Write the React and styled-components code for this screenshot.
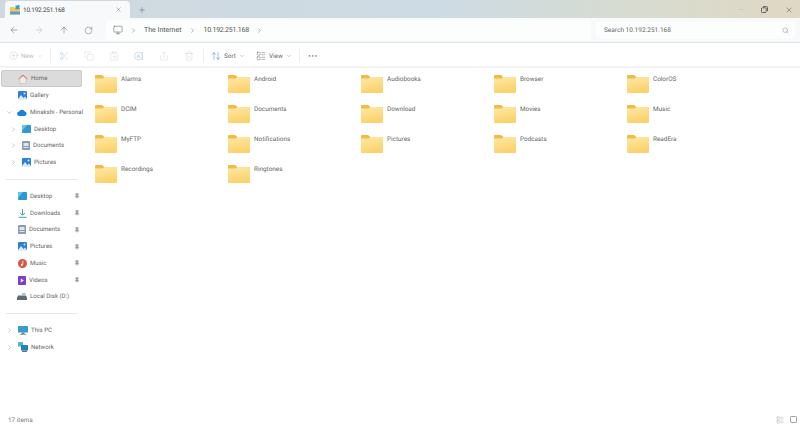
import React from "react";
import styled, { createGlobalStyle } from "styled-components";
import {
  ArrowLeft,
  ArrowRight,
  ArrowUp,
  RotateCw,
  ChevronRight,
  ChevronDown,
  CirclePlus,
  Scissors,
  Copy,
  ClipboardCopy,
  Share,
  Trash2,
  ArrowUpDown,
  LayoutList,
  Monitor,
  Search,
  X,
  Plus,
  Minus,
  Pin,
} from "lucide-react";

const GlobalStyle = createGlobalStyle`
  html, body { margin: 0; padding: 0; background: #fff; }
  body {
    font-family: Roboto, "Noto Sans", sans-serif;
    color: #555;
    overflow: hidden;
    text-rendering: geometricPrecision;
  }
  svg { flex: none; }
`;

const Window = styled.div`
  width: 800px;
  height: 425px;
  display: flex;
  flex-direction: column;
  background: #fff;
  overflow: hidden;
`;

const TitleBar = styled.div`
  height: 18px;
  flex: none;
  display: flex;
  align-items: flex-end;
  padding-left: 5px;
  background: linear-gradient(90deg, #cfd8de 0%, #cddbe4 55%, #d8dcd0 80%, #e0d8c4 100%);
`;

const Tab = styled.div`
  width: 125px;
  height: 17px;
  box-sizing: border-box;
  display: flex;
  align-items: center;
  padding: 0 8px 0 5px;
  gap: 3px;
  background: #f7f9fa;
  border-radius: 4px 4px 0 0;
  font-size: 6.4px;
  letter-spacing: -0.2px;
  color: #444;
`;

const TabTitle = styled.span`
  flex: 1;
`;

const NewTab = styled.div`
  margin: 0 0 0 8px;
  height: 17px;
  display: flex;
  align-items: center;
  color: #666;
`;

const WindowControls = styled.div`
  margin-left: auto;
  height: 17px;
  display: flex;
  align-items: center;
  gap: 17px;
  padding-right: 7px;
  color: #555;
`;

const AddressRow = styled.div`
  height: 25px;
  flex: none;
  box-sizing: border-box;
  display: flex;
  align-items: center;
  background: #f7f9fa;
  border-bottom: 1px solid #dde3e6;
  padding-left: 9px;
`;

const NavButtons = styled.div`
  display: flex;
  gap: 15px;
  align-items: center;
  width: 96px;
  flex: none;
  color: #777;
`;

const PathBox = styled.div`
  width: 485px;
  height: 20px;
  margin-left: 1px;
  flex: none;
  display: flex;
  align-items: center;
  gap: 7px;
  padding-left: 7px;
  box-sizing: border-box;
  background: #fcfdfd;
  border-radius: 3px;
  font-size: 7px;
  color: #555;
`;

const PathAddress = styled.span`
  margin-left: 1px;
  letter-spacing: -0.25px;
`;

const SearchBox = styled.div`
  width: 199px;
  height: 17px;
  margin-left: 5px;
  flex: none;
  box-sizing: border-box;
  display: flex;
  align-items: center;
  justify-content: space-between;
  padding: 0 6px 0 8px;
  background: #fcfdfd;
  border-radius: 3px;
  font-size: 6.5px;
  color: #666;
`;

const Toolbar = styled.div`
  height: 25px;
  flex: none;
  box-sizing: border-box;
  display: flex;
  align-items: center;
  padding: 2px 0 0 9px;
  background: #fff;
  border-bottom: 2px solid #f3f3f3;
  font-size: 6.4px;
  color: #666;
`;

const ToolLabel = styled.div`
  display: flex;
  align-items: center;
  gap: 3px;
  color: ${(p) => (p.$muted ? "#bbb" : "#666")};
  width: ${(p) => p.$width}px;
  flex: none;
`;

const ToolIcons = styled.div`
  display: flex;
  align-items: center;
  gap: 15px;
  width: 152px;
  flex: none;
  color: #c7d6e2;
  padding-left: 8px;
  box-sizing: border-box;
`;

const Separator = styled.div`
  width: 1px;
  height: 15px;
  background: #eee;
  flex: none;
  margin-right: ${(p) => p.$gap || 0}px;
`;

const Dots = styled.div`
  letter-spacing: 0.5px;
  font-size: 9px;
  font-weight: 700;
  color: #444;
  line-height: 1;
  margin-top: 3px;
`;

const Body = styled.div`
  flex: 1;
  display: flex;
  min-height: 0;
`;

const Sidebar = styled.div`
  width: 83px;
  flex: none;
  padding: 2px 0 0 1px;
  box-sizing: border-box;
`;

const NavRow = styled.div`
  width: 81px;
  height: 16.75px;
  box-sizing: border-box;
  display: flex;
  align-items: center;
  gap: 3px;
  padding: 1px 0 0 ${(p) => p.$indent}px;
  font-size: 6.1px;
  color: #666;
  white-space: nowrap;
  background: ${(p) => (p.$active ? "#dbdbdb" : "transparent")};
  border-radius: 2px;
  border: ${(p) => (p.$active ? "1px solid #cbcbcb" : "none")};
`;

const Arrow = styled.span`
  width: 8px;
  margin-left: -12px;
  margin-right: 1px;
  display: flex;
  color: #888;
`;

const PinMark = styled.span`
  margin-left: auto;
  margin-right: 2px;
  display: flex;
  color: #999;
`;

const Divider = styled.div`
  width: 72px;
  height: 1px;
  margin: 8px 0 8px 5px;
  background: #e8e8e8;
`;

const Content = styled.div`
  flex: 1;
  padding: 7px 0 0 12px;
  display: grid;
  grid-template-columns: repeat(5, 133px);
  grid-auto-rows: 30px;
  align-content: start;
`;

const Item = styled.div`
  display: flex;
  gap: 4px;
  font-size: 6.4px;
  color: #666;
`;

const ItemName = styled.span`
  line-height: 9px;
`;

const StatusBar = styled.div`
  height: 10px;
  flex: none;
  box-sizing: border-box;
  display: flex;
  align-items: center;
  justify-content: space-between;
  padding: 0 3px 1px 8px;
  font-size: 6.4px;
  color: #777;
`;

const ViewIcons = styled.div`
  display: flex;
  gap: 6px;
  align-items: center;
  color: #888;
`;

const Folder = () => (
  <svg width="22" height="18" viewBox="0 0 22 18">
    <defs>
      <linearGradient id="folderFront" x1="0" y1="0" x2="0.300" y2="1">
        <stop offset="0" stopColor="#fee9a8" />
        <stop offset="1" stopColor="#fbd26c" />
      </linearGradient>
    </defs>
    <path d="M0 1a1 1 0 0 1 1-1h6l2.500 2H21a1 1 0 0 1 1 1v2H0z" fill="#f5ba45" />
    <path d="M0 3.500h7.500l2-1.500H21a1 1 0 0 1 1 1v14a1 1 0 0 1-1 1H1a1 1 0 0 1-1-1z" fill="url(#folderFront)" />
  </svg>
);

const HomeIcon = () => (
  <svg width="10" height="10" viewBox="0 0 10 10">
    <path d="M2 5v4.500h6V5L5 2z" fill="#f2ece6" stroke="#b5b5b5" strokeWidth="0.500" />
    <path d="M0.500 5 5 1l4.500 4" fill="none" stroke="#d9775f" strokeWidth="1" />
  </svg>
);

const PicturesIcon = () => (
  <svg width="9" height="9" viewBox="0 0 9 9">
    <rect width="9" height="9" rx="1" fill="#2f7fd6" />
    <path d="M0 8 3 4l2.500 3L7 5.500 9 8v1H0z" fill="#d8ecfb" />
    <circle cx="6.500" cy="2.500" r="1" fill="#d8ecfb" />
  </svg>
);

const CloudIcon = () => (
  <svg width="10" height="7" viewBox="0 0 10 7">
    <path d="M2.500 7a2.200 2.200 0 0 1-.3-4.400A3 3 0 0 1 7.800 2.500 2.300 2.300 0 0 1 7.700 7z" fill="#1583d8" />
  </svg>
);

const DesktopIcon = () => (
  <svg width="9" height="8" viewBox="0 0 9 8">
    <rect width="9" height="8" rx="0.800" fill="#2b9ad4" />
    <path d="M0 0h5L0 6z" fill="#67c7ea" />
  </svg>
);

const DocumentsIcon = () => (
  <svg width="8" height="9" viewBox="0 0 8 9">
    <rect width="8" height="9" rx="0.800" fill="#8b9cb0" />
    <rect x="1.500" y="2" width="5" height="3" fill="#dde4ec" />
    <rect x="1.500" y="6" width="5" height="1" fill="#dde4ec" />
  </svg>
);

const DownloadsIcon = () => (
  <svg width="9" height="9" viewBox="0 0 9 9">
    <path d="M4.500 0v6M2 3.800l2.500 2.500L7 3.800" fill="none" stroke="#33a37a" strokeWidth="0.900" />
    <path d="M0.500 8.300h8" stroke="#3c8fc4" strokeWidth="0.900" />
  </svg>
);

const MusicIcon = () => (
  <svg width="9" height="9" viewBox="0 0 9 9">
    <circle cx="4.500" cy="4.500" r="4.500" fill="#d9573f" />
    <path d="M4.800 1.800v3.800" stroke="#fff" strokeWidth="0.800" />
    <circle cx="3.800" cy="5.800" r="1.100" fill="#fff" />
  </svg>
);

const VideosIcon = () => (
  <svg width="8" height="9" viewBox="0 0 8 9">
    <rect width="8" height="9" rx="0.800" fill="#7b3fc9" />
    <path d="M2.800 2.500v4l3-2z" fill="#fff" />
  </svg>
);

const DiskIcon = () => (
  <svg width="10" height="7" viewBox="0 0 10 7">
    <path d="M1 2.500h8l1 2.500v2H0V5z" fill="#5e6a73" />
    <path d="M5 0h3.500v2.500H5z" fill="#a9c3d6" />
  </svg>
);

const PcIcon = () => (
  <svg width="10" height="9" viewBox="0 0 10 9">
    <rect width="10" height="6.500" rx="0.600" fill="#3a9bd0" />
    <rect x="3.500" y="6.500" width="3" height="1.500" fill="#6d8492" />
    <rect x="2" y="8" width="6" height="1" fill="#8fa3af" />
  </svg>
);

const NetworkIcon = () => (
  <svg width="10" height="10" viewBox="0 0 10 10">
    <rect width="5" height="4.500" rx="0.500" fill="#56b3de" />
    <rect x="3" y="3" width="7" height="5.500" rx="0.500" fill="#1f86bd" />
    <rect x="4" y="8.500" width="5" height="1.500" fill="#5d7a8a" />
  </svg>
);

const TabIcon = () => (
  <svg width="10" height="10" viewBox="0 0 10 10">
    <path d="M0 2h4l1 1h5v6.500H0z" fill="#f6c84f" />
    <path d="M5.500 0.500 9.500 0v4l-4 .5z" fill="#3d9bd6" />
    <path d="M0 6.500h10v3H0z" fill="#5f9fc9" />
  </svg>
);

const RestoreIcon = () => (
  <svg width="7" height="7" viewBox="0 0 7 7" fill="none" stroke="currentColor" strokeWidth="0.900">
    <rect x="0.500" y="1.800" width="4.700" height="4.700" rx="0.800" />
    <path d="M2 .6h3.500a1 1 0 0 1 1 1V5" />
  </svg>
);

const RenameIcon = () => (
  <svg width="10" height="10" viewBox="0 0 10 10" fill="none" stroke="currentColor" strokeWidth="0.800">
    <circle cx="4.500" cy="5" r="4" />
    <path d="M3 7l1.500-4L6 7M3.500 5.800h2M8.500 1v8" />
  </svg>
);

const folders = [
  "Alarms", "Android", "Audiobooks", "Browser", "ColorOS",
  "DCIM", "Documents", "Download", "Movies", "Music",
  "MyFTP", "Notifications", "Pictures", "Podcasts", "ReadEra",
  "Recordings", "Ringtones",
];

const pinned = [
  ["Desktop", DesktopIcon],
  ["Downloads", DownloadsIcon],
  ["Documents", DocumentsIcon],
  ["Pictures", PicturesIcon],
  ["Music", MusicIcon],
  ["Videos", VideosIcon],
];

const Chevron = () => (
  <Arrow>
    <ChevronRight size={7} strokeWidth={1.5} />
  </Arrow>
);

const App = () => {
  return (
    <Window>
      <GlobalStyle />
      <TitleBar>
        <Tab>
          <TabIcon />
          <TabTitle>10.192.251.168</TabTitle>
          <X size={7} strokeWidth={1.5} color="#666" />
        </Tab>
        <NewTab>
          <Plus size={8} strokeWidth={1.5} />
        </NewTab>
        <WindowControls>
          <Minus size={7} strokeWidth={1} color="#999" />
          <RestoreIcon />
          <X size={8} strokeWidth={1.5} />
        </WindowControls>
      </TitleBar>

      <AddressRow>
        <NavButtons>
          <ArrowLeft size={10} strokeWidth={1.4} />
          <ArrowRight size={10} strokeWidth={1.4} color="#bbb" />
          <ArrowUp size={10} strokeWidth={1.4} />
          <RotateCw size={9} strokeWidth={1.4} />
        </NavButtons>
        <PathBox>
          <Monitor size={10} strokeWidth={1.2} color="#555" />
          <ChevronRight size={7} strokeWidth={1.5} />
          <span>The Internet</span>
          <ChevronRight size={7} strokeWidth={1.5} />
          <PathAddress>10.192.251.168</PathAddress>
          <ChevronRight size={7} strokeWidth={1.5} />
        </PathBox>
        <SearchBox>
          <span>Search 10.192.251.168</span>
          <Search size={7} strokeWidth={1.4} color="#777" />
        </SearchBox>
      </AddressRow>

      <Toolbar>
        <ToolLabel $muted $width={41}>
          <CirclePlus size={9} strokeWidth={1} />
          <span>New</span>
          <ChevronDown size={6} strokeWidth={1.4} />
        </ToolLabel>
        <Separator />
        <ToolIcons>
          <Scissors size={10} strokeWidth={1.1} color="#a9c6e0" />
          <Copy size={10} strokeWidth={1.1} />
          <ClipboardCopy size={10} strokeWidth={1.1} />
          <RenameIcon />
          <Share size={10} strokeWidth={1.1} />
          <Trash2 size={10} strokeWidth={1.1} color="#cfcfcf" />
        </ToolIcons>
        <Separator $gap={7} />
        <ToolLabel $width={45}>
          <ArrowUpDown size={10} strokeWidth={1.2} color="#3a7bbf" />
          <span>Sort</span>
          <ChevronDown size={6} strokeWidth={1.4} />
        </ToolLabel>
        <ToolLabel $width={43}>
          <LayoutList size={10} strokeWidth={1.1} />
          <span>View</span>
          <ChevronDown size={6} strokeWidth={1.4} />
        </ToolLabel>
        <Separator $gap={8} />
        <Dots>···</Dots>
      </Toolbar>

      <Body>
        <Sidebar>
          <NavRow $active $indent={16}>
            <HomeIcon />
            Home
          </NavRow>
          <NavRow $indent={17}>
            <PicturesIcon />
            Gallery
          </NavRow>
          <NavRow $indent={17}>
            <Arrow>
              <ChevronDown size={7} strokeWidth={1.5} />
            </Arrow>
            <CloudIcon />
            Minakshi - Personal
          </NavRow>
          <NavRow $indent={21}>
            <Chevron />
            <DesktopIcon />
            Desktop
          </NavRow>
          <NavRow $indent={21}>
            <Chevron />
            <DocumentsIcon />
            Documents
          </NavRow>
          <NavRow $indent={21}>
            <Chevron />
            <PicturesIcon />
            Pictures
          </NavRow>
          <Divider />
          {pinned.map(([name, Icon]) => (
            <NavRow key={name} $indent={17}>
              <Icon />
              {name}
              <PinMark>
                <Pin size={6} strokeWidth={1.6} fill="currentColor" />
              </PinMark>
            </NavRow>
          ))}
          <NavRow $indent={16}>
            <DiskIcon />
            Local Disk (D:)
          </NavRow>
          <Divider />
          <NavRow $indent={17}>
            <Chevron />
            <PcIcon />
            This PC
          </NavRow>
          <NavRow $indent={17}>
            <Chevron />
            <NetworkIcon />
            Network
          </NavRow>
        </Sidebar>
        <Content>
          {folders.map((name) => (
            <Item key={name}>
              <Folder />
              <ItemName>{name}</ItemName>
            </Item>
          ))}
        </Content>
      </Body>

      <StatusBar>
        <span>17 items</span>
        <ViewIcons>
          <LayoutList size={8} strokeWidth={1} />
          <svg width="7" height="7" viewBox="0 0 7 7" fill="none" stroke="currentColor" strokeWidth="0.800">
            <rect x="0.500" y="0.500" width="6" height="6" rx="0.800" />
          </svg>
        </ViewIcons>
      </StatusBar>
    </Window>
  );
};

export default App;
